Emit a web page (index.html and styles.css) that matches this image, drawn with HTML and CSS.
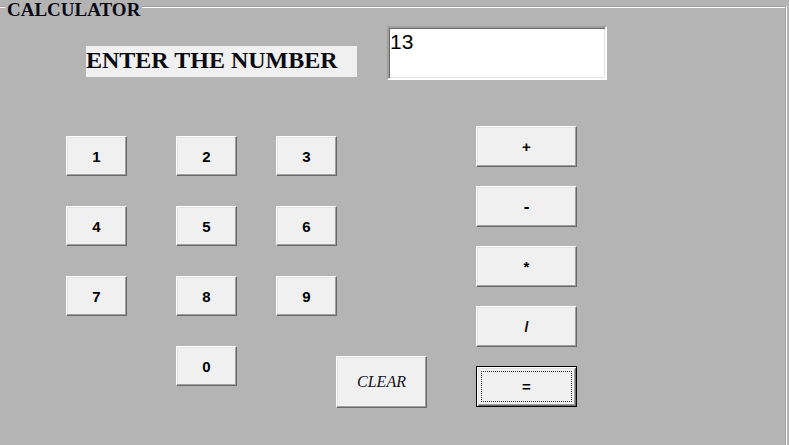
FILE: index.html
```html
<!DOCTYPE html>
<html>
<head>
<meta charset="utf-8">
<title>Calculator</title>
<link rel="stylesheet" href="styles.css">
</head>
<body>
<div class="group">
  <div class="legend">CALCULATOR</div>
  <div class="top-row">
    <div class="prompt">ENTER THE NUMBER</div>
    <div class="display">13</div>
  </div>
  <div class="keypad">
    <div class="left">
      <div class="digits">
        <button class="btn">1</button>
        <button class="btn">2</button>
        <button class="btn">3</button>
        <button class="btn">4</button>
        <button class="btn">5</button>
        <button class="btn">6</button>
        <button class="btn">7</button>
        <button class="btn">8</button>
        <button class="btn">9</button>
      </div>
      <div class="bottom-row">
        <button class="btn">0</button>
        <button class="btn clear">CLEAR</button>
      </div>
    </div>
    <div class="ops">
      <button class="btn op">+</button>
      <button class="btn op minus">-</button>
      <button class="btn op">*</button>
      <button class="btn op">/</button>
      <button class="btn op focus">=</button>
    </div>
  </div>
</div>
</body>
</html>
```
FILE: styles.css
```css
html, body {
  margin: 0;
  height: 100%;
}
body {
  background: #b4b4b4;
  overflow: hidden;
  font-family: "Liberation Sans", Arial, sans-serif;
}
.group {
  position: relative;
  margin-top: 6px;
  width: 786px;
  height: 460px;
  box-sizing: border-box;
  border-top: 1px solid #a0a0a0;
  border-right: 1px solid #a0a0a0;
  box-shadow: inset 0 1px 0 #fff, 1px 0 0 #fff;
}
.legend {
  position: absolute;
  left: 5px;
  top: -5px;
  height: 15px;
  padding: 0 2px;
  background: #b4b4b4;
  font: bold 19px/15px "Liberation Serif", "Times New Roman", serif;
  color: #0a0a14;
  white-space: nowrap;
}
.top-row {
  display: flex;
  align-items: flex-start;
  padding-top: 19px;
}
.prompt {
  margin-left: 86px;
  margin-top: 20px;
  width: 271px;
  height: 31px;
  box-sizing: border-box;
  background: #f0f0f0;
  font: bold 24px/28px "Liberation Serif", "Times New Roman", serif;
  color: #0a0a14;
  white-space: nowrap;
}
.display {
  margin-left: 30px;
  width: 220px;
  height: 54px;
  box-sizing: border-box;
  background: #fff;
  border: 2px solid;
  border-color: #a0a0a0 #fff #fff #a0a0a0;
  box-shadow: inset 1px 1px 0 #696969, inset -1px -1px 0 #e3e3e3;
  font: 21px "Liberation Sans", Arial, sans-serif;
  color: #000;
  padding: 2px 0 0 1px;
}
.keypad {
  display: flex;
  align-items: flex-start;
  margin-top: 46px;
}
.left {
  margin-left: 66px;
  padding-top: 10px;
  width: 361px;
}
.digits {
  display: grid;
  grid-template-columns: 110px 100px 61px;
  grid-auto-rows: 40px;
  row-gap: 30px;
}
.btn {
  width: 61px;
  height: 40px;
  box-sizing: border-box;
  margin: 0;
  padding: 0;
  background: #f0f0f0;
  border: 1px solid;
  border-color: #fff #696969 #696969 #fff;
  box-shadow: inset -1px -1px 0 #a0a0a0, inset 1px 1px 0 #e3e3e3;
  font: bold 15px "Liberation Sans", Arial, sans-serif;
  color: #000;
  text-align: center;
}
.bottom-row {
  display: flex;
  align-items: flex-start;
  margin-top: 30px;
  padding-left: 110px;
}
.clear {
  margin-left: 99px;
  margin-top: 10px;
  width: 91px;
  height: 52px;
  font: italic 16px "Liberation Serif", "Times New Roman", serif;
  color: #10101e;
}
.ops {
  margin-left: 49px;
  display: flex;
  flex-direction: column;
  gap: 19px;
}
.op {
  width: 101px;
  height: 41px;
}
.op.minus {
  font-size: 17px;
}
.op.focus {
  border: 1px solid #000;
  box-shadow: inset 1px 1px 0 #fff, inset -1px -1px 0 #696969, inset 2px 2px 0 #e3e3e3, inset -2px -2px 0 #a0a0a0;
  outline: 1px dotted #333;
  outline-offset: -6px;
}
```
